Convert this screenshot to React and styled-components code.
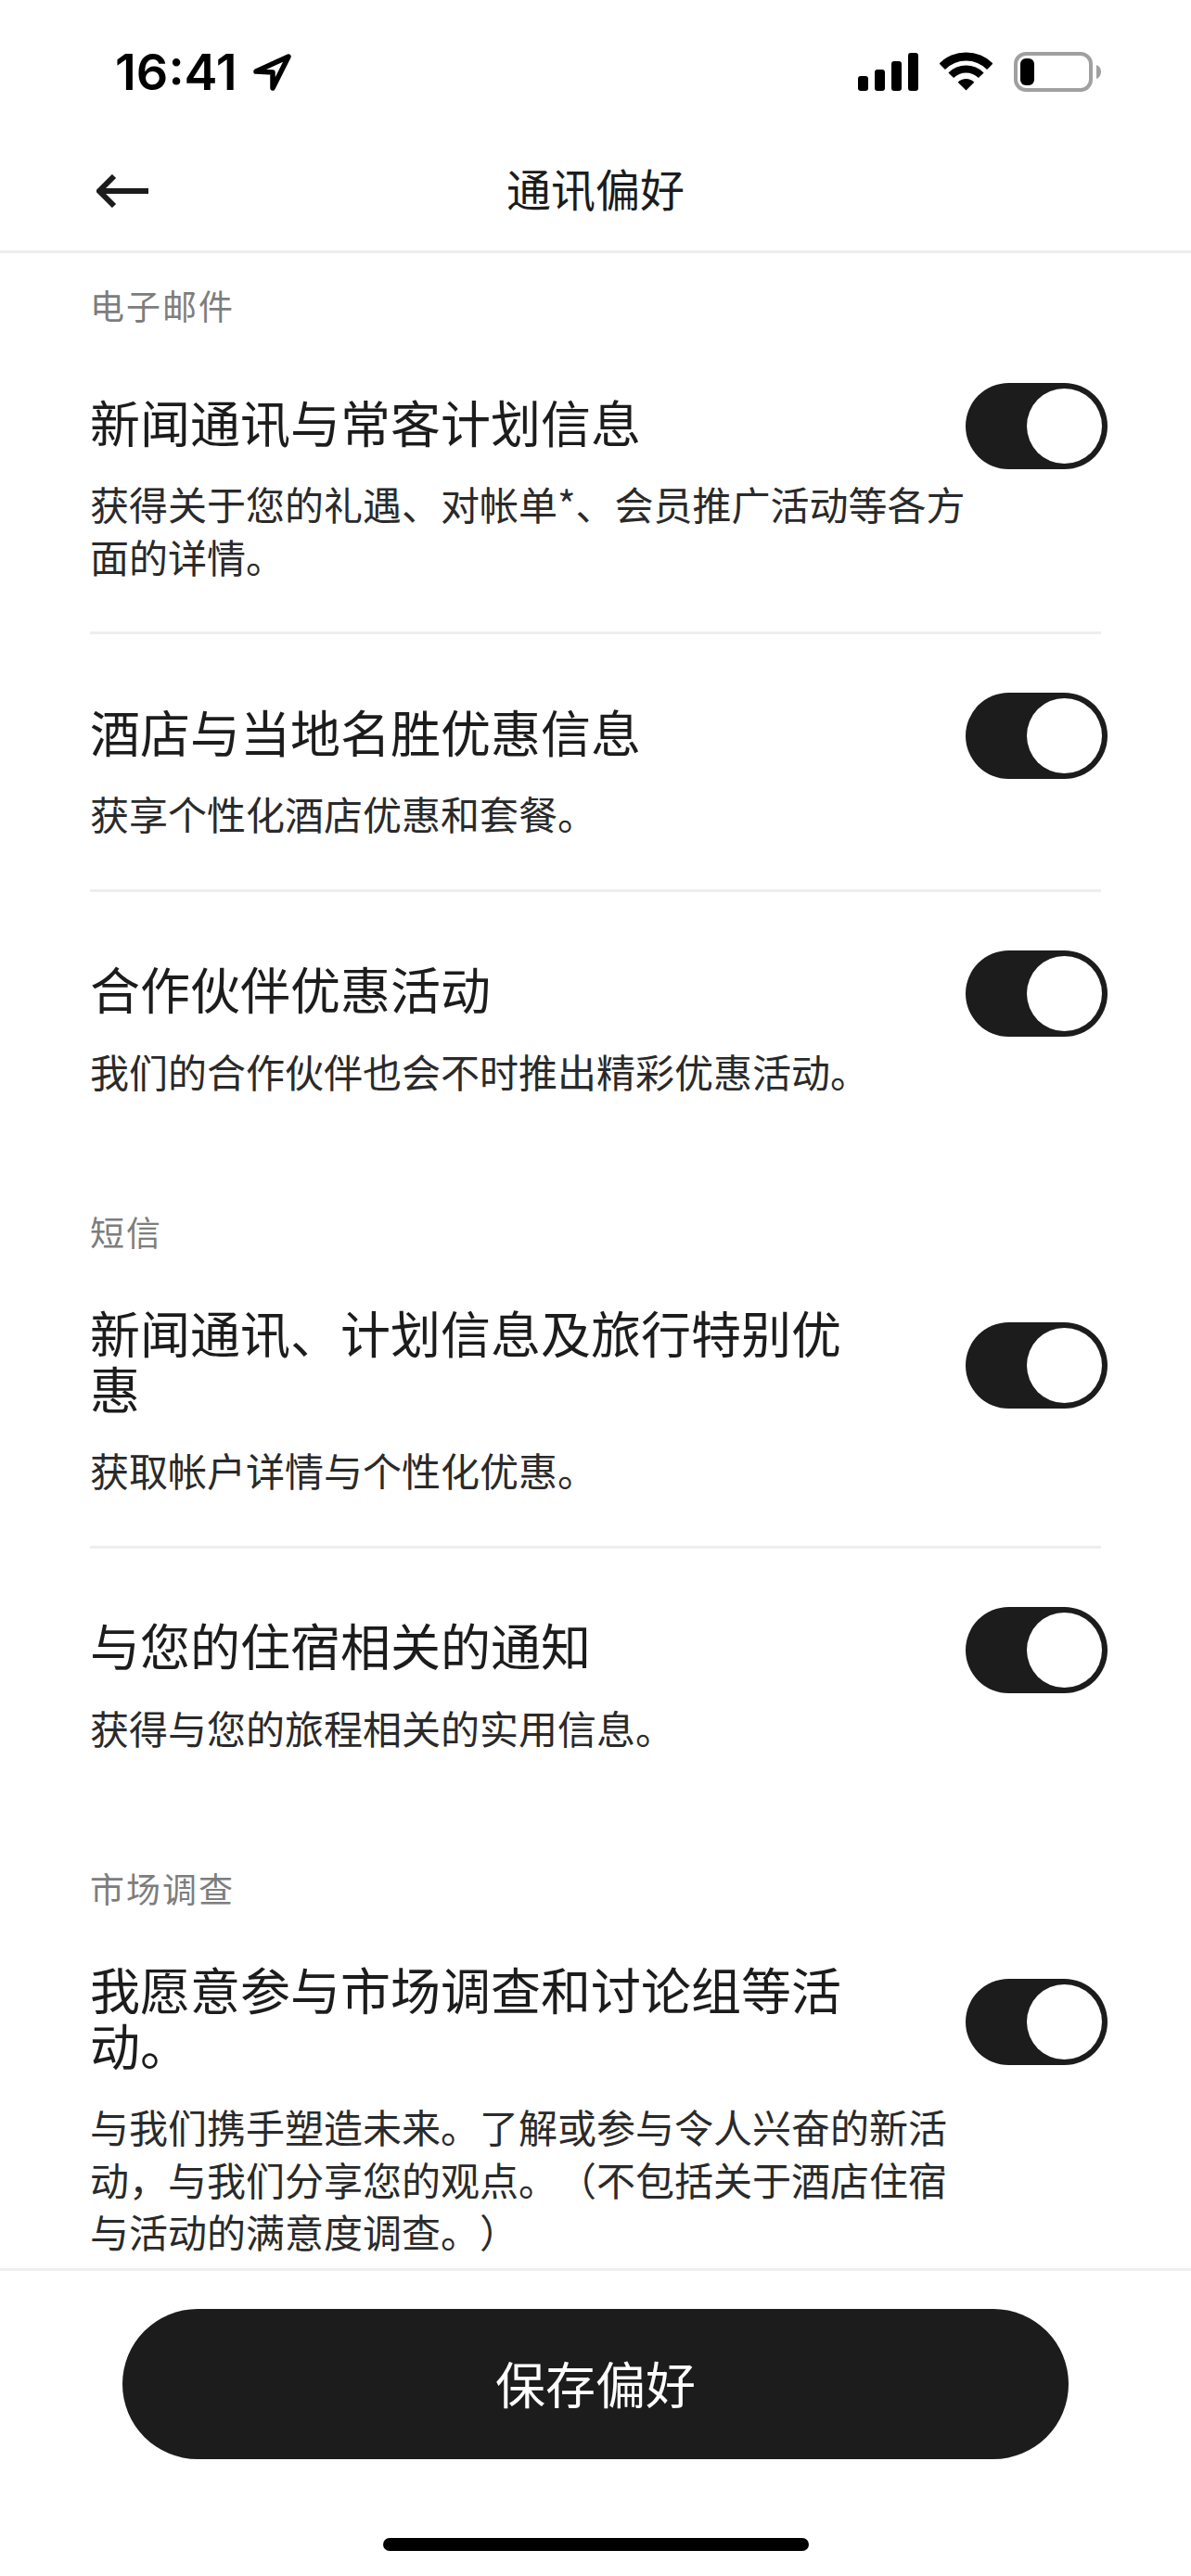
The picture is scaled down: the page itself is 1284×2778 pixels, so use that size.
import React from "react";
import styled, { createGlobalStyle } from "styled-components";

const GlobalStyle = createGlobalStyle`
  html, body {
    margin: 0;
    padding: 0;
    background: #ffffff;
  }
  * {
    box-sizing: border-box;
  }
`;

const Page = styled.div`
  width: 1284px;
  height: 2778px;
  display: flex;
  flex-direction: column;
  background: #ffffff;
  color: #1c1c1c;
  font-family: "Noto Sans CJK SC", "Noto Sans", sans-serif;
  text-spacing-trim: space-all;
  overflow: hidden;
`;

const StatusBar = styled.div`
  height: 135px;
  flex: none;
  display: flex;
  justify-content: space-between;
  padding: 56px 97px 0 124px;
`;

const TimeBlock = styled.div`
  display: flex;
  gap: 14px;
  height: 44px;
`;

const Time = styled.span`
  font-family: Inter, sans-serif;
  font-size: 54px;
  line-height: 44px;
  font-weight: 600;
  color: #000000;
`;

const StatusIcons = styled.div`
  display: flex;
  gap: 23px;
  height: 44px;
`;

const NavBar = styled.div`
  height: 138px;
  flex: none;
  position: relative;
  display: flex;
  align-items: center;
  justify-content: center;
  border-bottom: 3px solid #eeeeee;
  padding-bottom: 2px;
`;

const BackButton = styled.svg`
  position: absolute;
  left: 104px;
  top: 53px;
`;

const NavTitle = styled.h1`
  margin: 0;
  font-size: 48px;
  line-height: 60px;
  font-weight: 400;
`;

const Scroller = styled.div`
  flex: 1;
  min-height: 0;
  overflow: hidden;
  padding: 32px 97px 0;
`;

const Section = styled.section`
  margin-bottom: ${p => p.$gap}px;
`;

const SectionLabel = styled.h2`
  margin: 0 0 ${p => p.$gap}px;
  font-size: 37px;
  line-height: 48px;
  font-weight: 400;
  letter-spacing: 2px;
  color: #7d7d7d;
`;

const Row = styled.div`
  padding-bottom: 53px;
  & + & {
    padding-top: 63px;
    border-top: 3px solid #eeeeee;
  }
  &:last-child {
    padding-bottom: 0;
  }
`;

const RowHead = styled.div`
  display: flex;
  align-items: center;
  justify-content: space-between;
  margin-right: -7px;
`;

const RowTitle = styled.div`
  width: 840px;
  padding: 11px 0 21px;
  font-size: 54px;
  line-height: 60px;
  font-weight: 400;
`;

const RowText = styled.p`
  margin: 9px 0 0;
  width: 950px;
  font-size: 42px;
  line-height: 56.5px;
  font-weight: 400;
  color: #2a2a2a;
`;

const Toggle = styled.div`
  width: 153px;
  height: 93px;
  flex: none;
  padding: 6px;
  display: flex;
  justify-content: flex-end;
  border-radius: 47px;
  background: #1c1c1c;
`;

const Knob = styled.span`
  width: 81px;
  height: 81px;
  border-radius: 50%;
  background: #ffffff;
`;

const Footer = styled.div`
  height: 332px;
  flex: none;
  display: flex;
  flex-direction: column;
  align-items: center;
  border-top: 3px solid #eeeeee;
  padding-top: 41px;
`;

const SaveButton = styled.button`
  width: 1020px;
  height: 162px;
  flex: none;
  border: 0;
  border-radius: 81px;
  padding: 0 0 3px;
  background: #1c1c1c;
  color: #ffffff;
  font-family: inherit;
  font-size: 54px;
  font-weight: 400;
`;

const HomeBar = styled.div`
  width: 459px;
  height: 14px;
  margin-top: 85px;
  border-radius: 7px;
  background: #000000;
`;

const LocationIcon = () => (
  <svg width="44" height="44" viewBox="0 0 44 44">
    <path
      d="M6 21 L41 5 L24 39 L24 22 Z"
      fill="none"
      stroke="#000"
      strokeWidth="5.5"
      strokeLinejoin="round"
    />
  </svg>
);

const SignalIcon = () => (
  <svg width="65" height="44" viewBox="0 0 65 44">
    <rect x="0" y="26" width="11" height="16" rx="3" fill="#000" />
    <rect x="18" y="19" width="11" height="23" rx="3" fill="#000" />
    <rect x="36" y="10" width="11" height="32" rx="3" fill="#000" />
    <rect x="54" y="1" width="11" height="41" rx="3" fill="#000" />
  </svg>
);

const WifiIcon = () => (
  <svg width="57" height="44" viewBox="0 0 57 44">
    <path d="M-0.5 12.5 A41 41 0 0 1 57.5 12.5 L51.1 18.9 A32 32 0 0 0 5.9 18.9 Z" fill="#000" />
    <path d="M9.4 22.4 A27 27 0 0 1 47.6 22.4 L41.9 28.1 A19 19 0 0 0 15.1 28.1 Z" fill="#000" />
    <path d="M19.7 32.7 A12.5 12.5 0 0 1 37.3 32.7 L28.5 41.5 Z" fill="#000" />
  </svg>
);

const BatteryIcon = () => (
  <svg width="94" height="44" viewBox="0 0 94 44">
    <rect x="2" y="2" width="81" height="39" rx="11" fill="none" stroke="#a0a0a0" strokeWidth="4" />
    <rect x="7" y="7" width="15" height="29" rx="6" fill="#000" />
    <path d="M89 14 C92 15 94 18 94 21.5 C94 25 92 28 89 29 Z" fill="#a0a0a0" />
  </svg>
);

const sections = [
  {
    label: "电子邮件",
    labelGap: 60,
    gap: 121,
    rows: [
      {
        title: "新闻通讯与常客计划信息",
        text: "获得关于您的礼遇、对帐单*、会员推广活动等各方面的详情。"
      },
      { title: "酒店与当地名胜优惠信息", text: "获享个性化酒店优惠和套餐。" },
      { title: "合作伙伴优惠活动", text: "我们的合作伙伴也会不时推出精彩优惠活动。" }
    ]
  },
  {
    label: "短信",
    labelGap: 44,
    gap: 121,
    rows: [
      { title: "新闻通讯、计划信息及旅行特别优惠", text: "获取帐户详情与个性化优惠。" },
      { title: "与您的住宿相关的通知", text: "获得与您的旅程相关的实用信息。" }
    ]
  },
  {
    label: "市场调查",
    labelGap: 44,
    gap: 0,
    rows: [
      {
        title: "我愿意参与市场调查和讨论组等活动。",
        text: "与我们携手塑造未来。了解或参与令人兴奋的新活动，与我们分享您的观点。（不包括关于酒店住宿与活动的满意度调查。）"
      }
    ]
  }
];

export default function App() {
  return (
    <Page>
      <GlobalStyle />
      <StatusBar>
        <TimeBlock>
          <Time>16:41</Time>
          <LocationIcon />
        </TimeBlock>
        <StatusIcons>
          <SignalIcon />
          <WifiIcon />
          <BatteryIcon />
        </StatusIcons>
      </StatusBar>
      <NavBar>
        <BackButton width="56" height="36" viewBox="0 0 56 36">
          <path
            d="M19 2 L3 18 L19 34 M3 18 L56 18"
            fill="none"
            stroke="#1c1c1c"
            strokeWidth="6"
          />
        </BackButton>
        <NavTitle>通讯偏好</NavTitle>
      </NavBar>
      <Scroller>
        {sections.map(section => (
          <Section key={section.label} $gap={section.gap}>
            <SectionLabel $gap={section.labelGap}>{section.label}</SectionLabel>
            {section.rows.map(row => (
              <Row key={row.title}>
                <RowHead>
                  <RowTitle>{row.title}</RowTitle>
                  <Toggle>
                    <Knob />
                  </Toggle>
                </RowHead>
                <RowText>{row.text}</RowText>
              </Row>
            ))}
          </Section>
        ))}
      </Scroller>
      <Footer>
        <SaveButton>保存偏好</SaveButton>
        <HomeBar />
      </Footer>
    </Page>
  );
}
